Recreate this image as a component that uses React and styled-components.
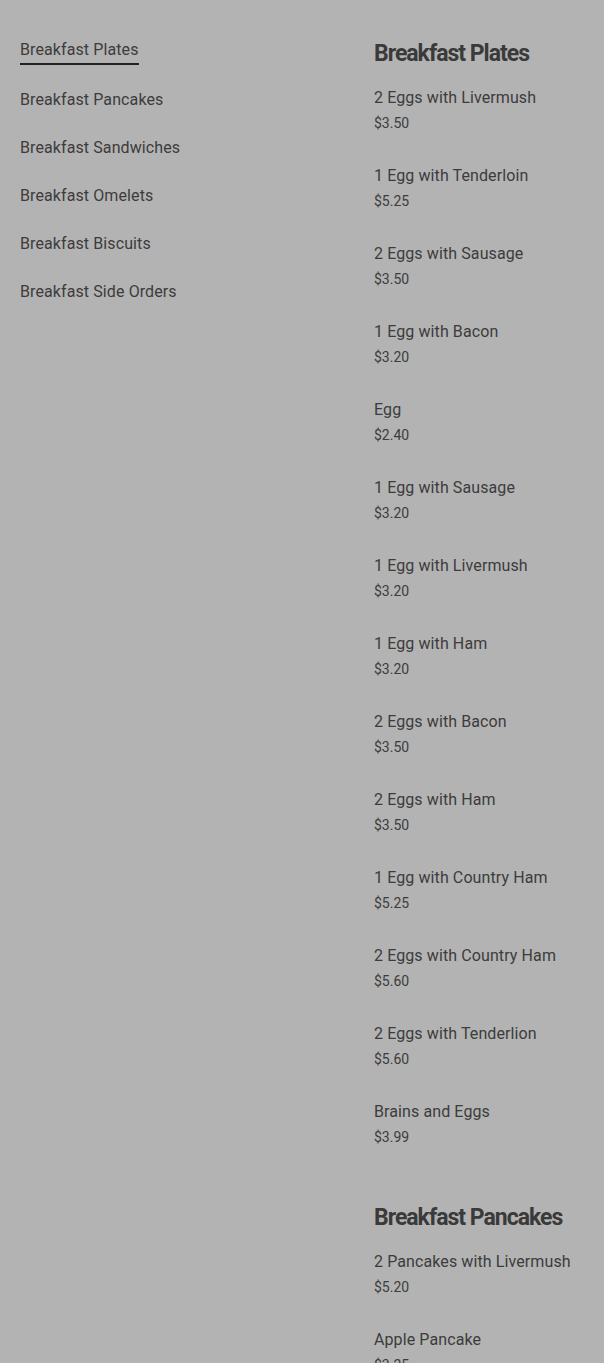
import React from 'react'
import styled, { createGlobalStyle } from 'styled-components'

const Global = createGlobalStyle`
  body {
    margin: 0;
    background: #b3b3b3;
    font-family: Roboto, 'Liberation Sans', sans-serif;
    color: #3c3c3c;
  }
`;

const Page = styled.div`
  display: grid;
  grid-template-columns: 354px 1fr;
  padding: 39px 20px 0;
  min-height: 1363px;
  box-sizing: border-box;
`;

const Nav = styled.nav`
  display: flex;
  flex-direction: column;
  align-items: flex-start;
  gap: 23px;
  padding-top: 1px;
`;

const NavLink = styled.a`
  font-size: 16px;
  line-height: 19px;
  letter-spacing: 0.1px;
  color: #3c3c3c;
  text-decoration: none;
  padding-bottom: 4px;
  margin-bottom: ${p => (p.$active ? '2px' : '0')};
  border-bottom: 2px solid ${p => (p.$active ? '#222' : 'transparent')};
`;

const Menu = styled.div`
  display: flex;
  flex-direction: column;
`;

const Section = styled.section`
  display: flex;
  flex-direction: column;
  margin-bottom: 23px;
`;

const Heading = styled.h2`
  margin: 0 0 19px;
  font-size: 23px;
  line-height: 30px;
  font-weight: 700;
  letter-spacing: -1px;
  color: #3a3a3a;
`;

const Item = styled.div`
  display: flex;
  flex-direction: column;
  gap: 7px;
  margin-bottom: 34px;
`;

const Name = styled.div`
  font-size: 16px;
  line-height: 20px;
  letter-spacing: 0.1px;
`;

const Price = styled.div`
  font-size: 14px;
  line-height: 17px;
`;

const categories = [
  'Breakfast Plates',
  'Breakfast Pancakes',
  'Breakfast Sandwiches',
  'Breakfast Omelets',
  'Breakfast Biscuits',
  'Breakfast Side Orders',
];

const sections = [
  {
    title: 'Breakfast Plates',
    items: [
      ['2 Eggs with Livermush', '$3.50'],
      ['1 Egg with Tenderloin', '$5.25'],
      ['2 Eggs with Sausage', '$3.50'],
      ['1 Egg with Bacon', '$3.20'],
      ['Egg', '$2.40'],
      ['1 Egg with Sausage', '$3.20'],
      ['1 Egg with Livermush', '$3.20'],
      ['1 Egg with Ham', '$3.20'],
      ['2 Eggs with Bacon', '$3.50'],
      ['2 Eggs with Ham', '$3.50'],
      ['1 Egg with Country Ham', '$5.25'],
      ['2 Eggs with Country Ham', '$5.60'],
      ['2 Eggs with Tenderlion', '$5.60'],
      ['Brains and Eggs', '$3.99'],
    ],
  },
  {
    title: 'Breakfast Pancakes',
    items: [
      ['2 Pancakes with Livermush', '$5.20'],
      ['Apple Pancake', '$3.25'],
    ],
  },
];

export default function App() {
  return (
    <>
      <Global />
      <Page>
        <Nav>
          {categories.map((c, i) => (
            <NavLink key={c} href="#" $active={i === 0}>{c}</NavLink>
          ))}
        </Nav>
        <Menu>
          {sections.map(s => (
            <Section key={s.title}>
              <Heading>{s.title}</Heading>
              {s.items.map(([name, price]) => (
                <Item key={name}>
                  <Name>{name}</Name>
                  <Price>{price}</Price>
                </Item>
              ))}
            </Section>
          ))}
        </Menu>
      </Page>
    </>
  )
}
